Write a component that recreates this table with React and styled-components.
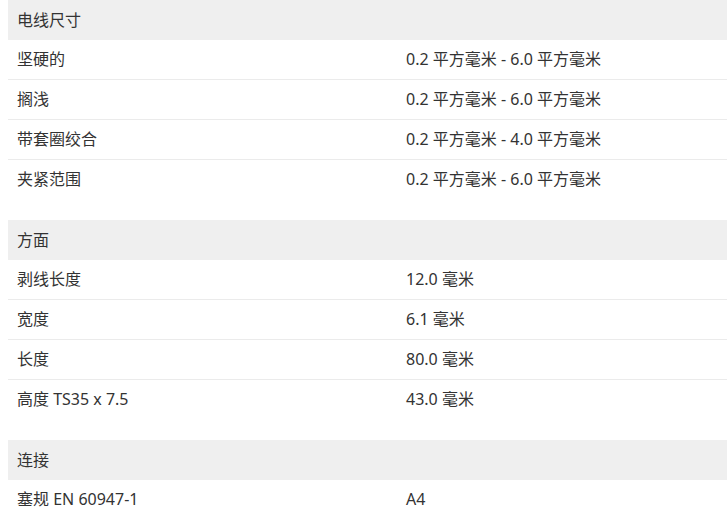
import React from 'react';
import styled, { createGlobalStyle } from 'styled-components';

const GlobalStyle = createGlobalStyle`
  html, body {
    margin: 0;
    padding: 0;
    background: #ffffff;
    overflow: hidden;
  }
  body {
    font-family: "Noto Sans", "Noto Sans CJK SC", sans-serif;
    color: #333333;
  }
`;

const sections = [
  {
    title: '电线尺寸',
    rows: [
      ['坚硬的', '0.2 平方毫米 - 6.0 平方毫米'],
      ['搁浅', '0.2 平方毫米 - 6.0 平方毫米'],
      ['带套圈绞合', '0.2 平方毫米 - 4.0 平方毫米'],
      ['夹紧范围', '0.2 平方毫米 - 6.0 平方毫米'],
    ],
  },
  {
    title: '方面',
    rows: [
      ['剥线长度', '12.0 毫米'],
      ['宽度', '6.1 毫米'],
      ['长度', '80.0 毫米'],
      ['高度 TS35 x 7.5', '43.0 毫米'],
    ],
  },
  {
    title: '连接',
    rows: [['塞规 EN 60947-1', 'A4']],
  },
];

const Page = styled.div`
  padding-left: 8px;
  width: 776px;
`;

const Section = styled.section`
  margin-bottom: 20px;
`;

const Header = styled.div`
  height: 40px;
  display: flex;
  align-items: center;
  padding-left: 9px;
  background: #efefef;
  font-size: 16px;
  line-height: 20px;
  color: #333333;
`;

const Row = styled.div`
  display: grid;
  grid-template-columns: 388px 388px;
  height: 40px;
  padding-bottom: 2px;
  align-items: center;
  border-bottom: 1px solid ${({ $last }) => ($last ? 'transparent' : '#ebebeb')};
  box-sizing: border-box;
`;

const Cell = styled.div`
  padding-left: ${({ $value }) => ($value ? '10px' : '9px')};
  font-size: 16px;
  line-height: 20px;
  color: #333333;
  white-space: nowrap;
`;

export default function App() {
  return (
    <Page>
      <GlobalStyle />
      {sections.map((s) => (
        <Section key={s.title}>
          <Header>{s.title}</Header>
          {s.rows.map(([label, value], i) => (
            <Row key={label} $last={i === s.rows.length - 1}>
              <Cell>{label}</Cell>
              <Cell $value>{value}</Cell>
            </Row>
          ))}
        </Section>
      ))}
    </Page>
  );
}
